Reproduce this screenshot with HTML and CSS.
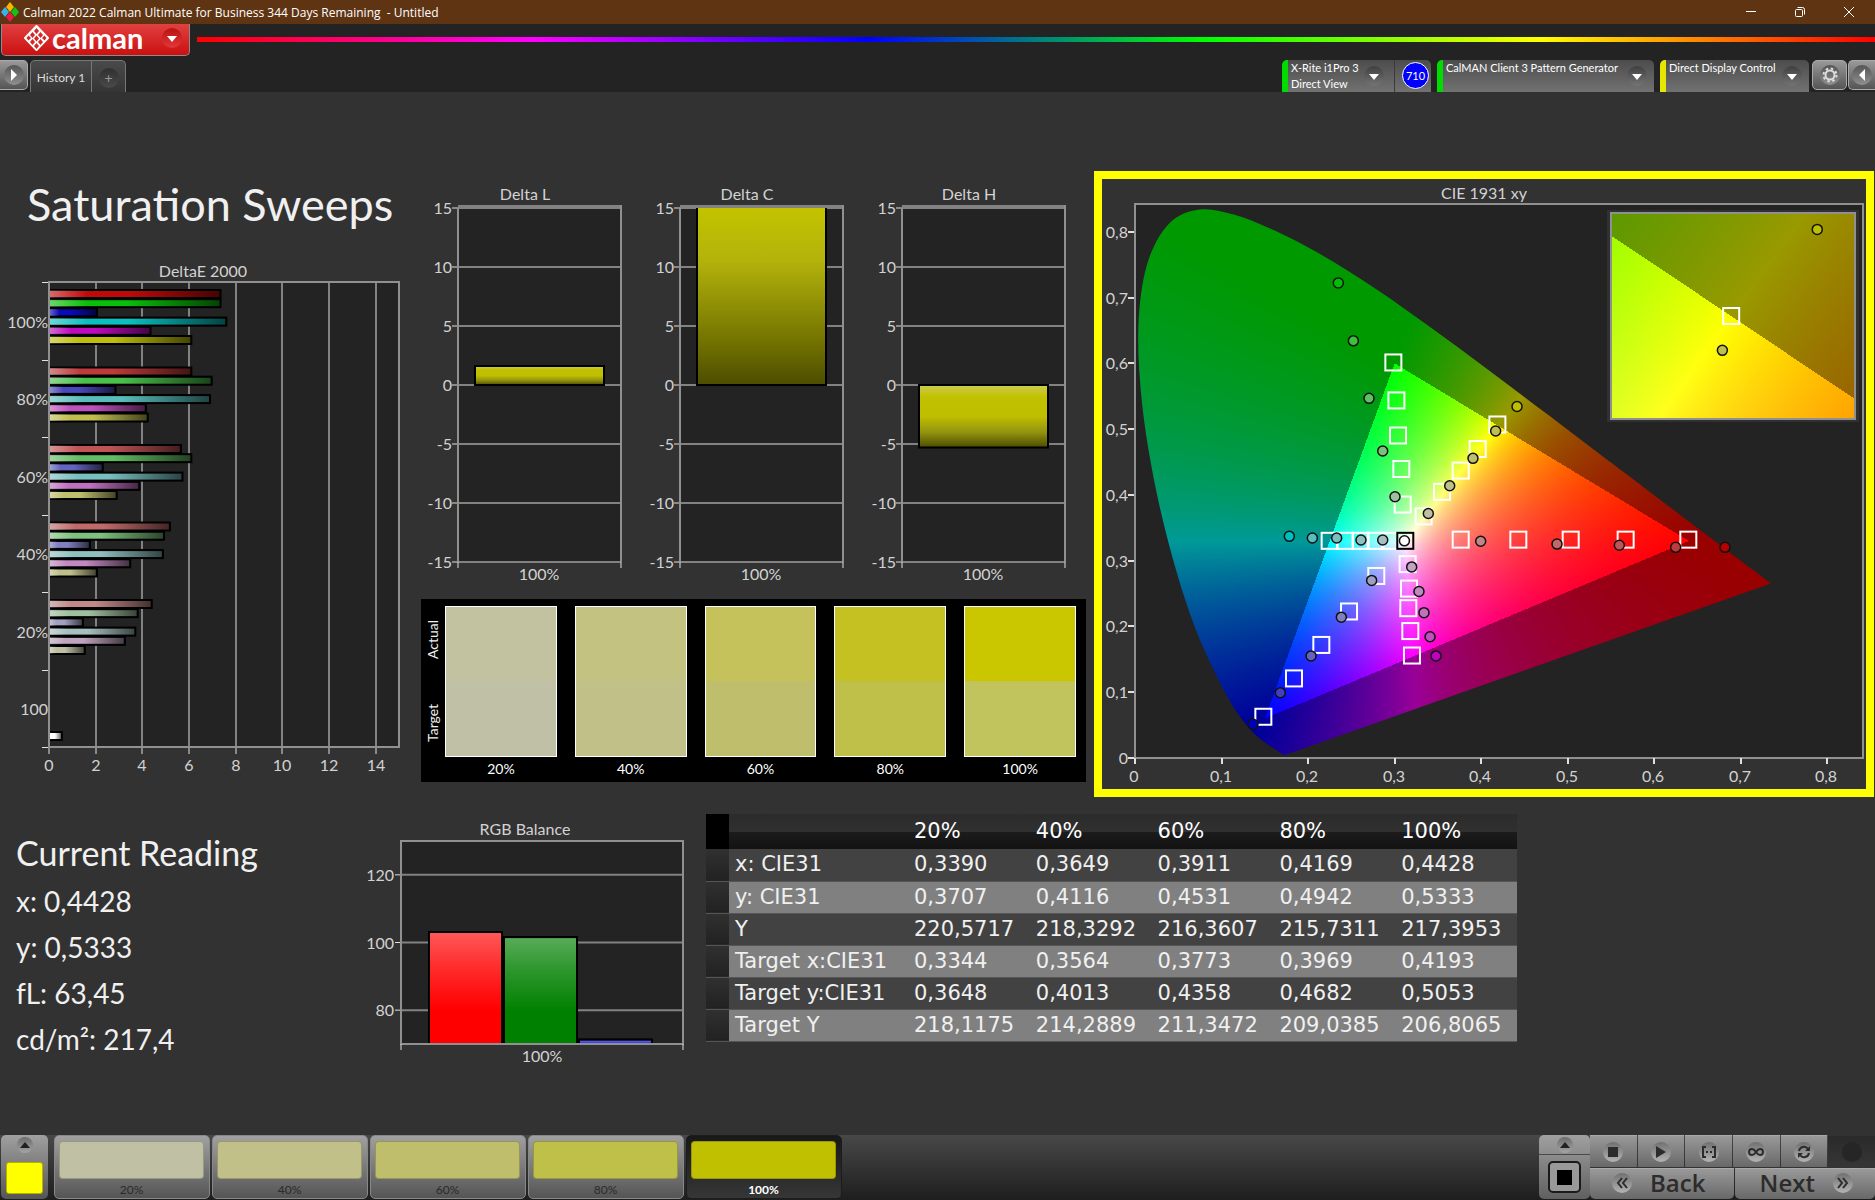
FILE: index.html
```html
<!DOCTYPE html>
<html lang="en">
<head>
  <meta charset="UTF-8">
  <meta name="viewport" content="width=device-width, initial-scale=1.0">
  <title>Calman 2022</title>
  <link rel="stylesheet" href="styles.css">
</head>
<body>
  <!-- Window title bar -->
  <div class="titlebar">
    <svg class="app-icon" width="18" height="20" viewBox="0 0 18 20">
      <path d="M9 0l4 5-4 5-4-5z" fill="#f5b800"/>
      <path d="M4 5l4 5-4 5-4-5z" fill="#35b5e8"/>
      <path d="M14 5l4 5-4 5-4-5z" fill="#12c412"/>
      <path d="M9 10l4 5-4 5-4-5z" fill="#f01848"/>
    </svg>
    <span class="window-title">Calman 2022 Calman Ultimate for Business 344 Days Remaining&nbsp; - Untitled</span>
    <div class="window-controls">
      <button aria-label="Minimize"><svg width="12" height="12"><path d="M1 5.500h10" stroke="#fff" fill="none"/></svg></button>
      <button aria-label="Restore"><svg width="12" height="12"><rect x="1.500" y="3.500" width="7" height="7" rx="1" stroke="#fff" fill="none"/><path d="M3.500 1.500h5a2 2 0 0 1 2 2v5" stroke="#fff" fill="none"/></svg></button>
      <button aria-label="Close"><svg width="12" height="12"><path d="M1 1l10 10M11 1L1 11" stroke="#fff" fill="none"/></svg></button>
    </div>
  </div>

  <header>
    <div class="brand-row">
      <button class="brand">
        <svg width="25" height="26" viewBox="0 0 25 26">
          <path d="M12.500 1L24 13 12.500 25 1 13z" fill="#fff" stroke="#fff" stroke-width="2" stroke-linejoin="round"/>
          <g fill="#d62525">
            <path d="M12.500 3l2.500 3-2.500 3-2.500-3z"/><path d="M8.500 7l2.500 3-2.500 3L6 10z"/><path d="M16.500 7l2.500 3-2.500 3-2.500-3z"/>
            <path d="M4.500 10.500L7 13l-2.500 2.500L2.500 13z"/><path d="M20.500 10.500l2 2.500-2 2.500L18 13z"/><path d="M12.500 10.500l2.500 3-2.500 3-2.500-3z"/>
            <path d="M8.500 14l2.500 3-2.500 3L6 17z"/><path d="M16.500 14l2.500 3-2.500 3-2.500-3z"/><path d="M12.500 18l2.500 3-2.500 3-2.500-3z"/>
          </g>
        </svg>
        <span class="brand-name">calman</span>
        <span class="knob knob-red"><svg width="12" height="7"><path d="M1 0h10L6 6z" fill="#fff"/></svg></span>
      </button>
      <div class="rainbow"></div>
    </div>

    <div class="tab-row">
      <button class="square-btn first" aria-label="Expand"><span class="knob"><svg width="8" height="12"><path d="M1 0v12l6-6z" fill="#fff"/></svg></span></button>
      <div class="tabs">
        <button class="tab">History 1</button>
        <button class="tab tab-add" aria-label="Add tab"><span class="knob knob-dark">+</span></button>
      </div>

      <div class="devices">
        <div class="device meter">
          <button class="device-btn">
            <span class="device-text">X-Rite i1Pro 3<br>Direct View</span>
            <span class="knob knob-dim"><svg width="12" height="7"><path d="M1 0h10L6 6z" fill="#fff"/></svg></span>
          </button>
          <button class="badge">710</button>
        </div>
        <div class="device source">
          <button class="device-btn">
            <span class="device-text">CalMAN Client 3 Pattern Generator</span>
            <span class="knob knob-dim"><svg width="12" height="7"><path d="M1 0h10L6 6z" fill="#fff"/></svg></span>
          </button>
        </div>
        <div class="device display">
          <button class="device-btn">
            <span class="device-text">Direct Display Control</span>
            <span class="knob knob-dim"><svg width="12" height="7"><path d="M1 0h10L6 6z" fill="#fff"/></svg></span>
          </button>
        </div>
        <button class="square-btn gear" aria-label="Settings"><span class="knob">
          <svg width="16" height="16" viewBox="-8 -8 16 16" fill="none" stroke="#ddd">
            <circle r="4.500" stroke-width="2"/>
            <circle r="6.500" stroke-width="2" stroke-dasharray="2.500 2.600"/>
          </svg></span></button>
        <button class="square-btn last" aria-label="Collapse"><span class="knob"><svg width="8" height="12"><path d="M7 0v12L1 6z" fill="#fff"/></svg></span></button>
      </div>
    </div>
  </header>

  <main>
    <div class="top-row">
      <section class="left">
        <h1>Saturation Sweeps</h1>
        <svg id="deltaE" class="chart" viewBox="0 0 414 530"></svg>
      </section>

      <section class="middle">
        <div class="deltas">
          <svg id="deltaL" class="chart" viewBox="0 0 222 428"></svg>
          <svg id="deltaC" class="chart" viewBox="0 0 222 428"></svg>
          <svg id="deltaH" class="chart" viewBox="0 0 222 428"></svg>
        </div>
        <div class="swatches">
          <div class="side"><span>Actual</span><span>Target</span></div>
          <div class="swatch"><div class="pair p20"></div>20%</div>
          <div class="swatch"><div class="pair p40"></div>40%</div>
          <div class="swatch"><div class="pair p60"></div>60%</div>
          <div class="swatch"><div class="pair p80"></div>80%</div>
          <div class="swatch"><div class="pair p100"></div>100%</div>
        </div>
      </section>

      <section class="cie">
        <svg id="cie" class="chart" viewBox="0 0 764 610"></svg>
      </section>
    </div>

    <div class="bottom-row">
      <section class="reading">
        <h2>Current Reading</h2>
        <p>x: 0,4428</p>
        <p>y: 0,5333</p>
        <p>fL: 63,45</p>
        <p>cd/m²: 217,4</p>
      </section>

      <svg id="rgb" class="chart" viewBox="0 0 349 280"></svg>

      <table>
        <thead>
          <tr><td class="handle"></td><th></th><th>20%</th><th>40%</th><th>60%</th><th>80%</th><th>100%</th></tr>
        </thead>
        <tbody>
          <tr><td class="handle"></td><th>x: CIE31</th><td>0,3390</td><td>0,3649</td><td>0,3911</td><td>0,4169</td><td>0,4428</td></tr>
          <tr><td class="handle"></td><th>y: CIE31</th><td>0,3707</td><td>0,4116</td><td>0,4531</td><td>0,4942</td><td>0,5333</td></tr>
          <tr><td class="handle"></td><th>Y</th><td>220,5717</td><td>218,3292</td><td>216,3607</td><td>215,7311</td><td>217,3953</td></tr>
          <tr><td class="handle"></td><th>Target x:CIE31</th><td>0,3344</td><td>0,3564</td><td>0,3773</td><td>0,3969</td><td>0,4193</td></tr>
          <tr><td class="handle"></td><th>Target y:CIE31</th><td>0,3648</td><td>0,4013</td><td>0,4358</td><td>0,4682</td><td>0,5053</td></tr>
          <tr><td class="handle"></td><th>Target Y</th><td>218,1175</td><td>214,2889</td><td>211,3472</td><td>209,0385</td><td>206,8065</td></tr>
        </tbody>
      </table>
    </div>
  </main>

  <footer>
    <button class="current" aria-label="Current pattern">
      <span class="knob knob-small"><svg width="10" height="6"><path d="M0 6h10L5 0z" fill="#222"/></svg></span>
      <span class="current-color"></span>
    </button>
    <div class="patterns">
      <button class="pattern"><span class="color c20"></span>20%</button>
      <button class="pattern"><span class="color c40"></span>40%</button>
      <button class="pattern"><span class="color c60"></span>60%</button>
      <button class="pattern"><span class="color c80"></span>80%</button>
      <button class="pattern selected"><span class="color c100"></span>100%</button>
    </div>

    <div class="transport">
      <div class="stop-box">
        <button class="stop-up" aria-label="More"><span class="knob knob-small"><svg width="10" height="6"><path d="M0 6h10L5 0z" fill="#222"/></svg></span></button>
        <button class="stop-main" aria-label="Pattern window"><span class="stop-frame"></span></button>
      </div>
      <div class="keys">
        <div class="key-row">
          <button aria-label="Stop"><span class="knob knob-light"><svg width="10" height="10"><path d="M0 0h10v10H0z" fill="#2c2c2c"/></svg></span></button>
          <button aria-label="Play"><span class="knob knob-light"><svg width="10" height="12"><path d="M0 0v12l10-6z" fill="#2c2c2c"/></svg></span></button>
          <button aria-label="Read range"><span class="knob knob-light"><svg width="14" height="12" fill="none" stroke="#2c2c2c" stroke-width="2"><path d="M4 1H1v10h3M10 1h3v10h-3"/><path d="M4 6h2M8 6h2"/></svg></span></button>
          <button aria-label="Continuous"><span class="knob knob-light"><svg width="16" height="8" fill="none" stroke="#2c2c2c" stroke-width="2"><path d="M8 4C6 1 5 1 4 1a3 3 0 0 0 0 6c1 0 2 0 4-3s3-3 4-3a3 3 0 0 1 0 6c-1 0-2 0-4-3z"/></svg></span></button>
          <button aria-label="Refresh"><span class="knob knob-light"><svg width="14" height="14" fill="none" stroke="#2c2c2c" stroke-width="2"><path d="M2 6a5 5 0 0 1 9-2M12 8a5 5 0 0 1-9 2"/><path d="M13 1v5H8zM1 13V8h5z" fill="#2c2c2c" stroke="none"/></svg></span></button>
          <button class="off" aria-label="Record" disabled><span class="knob knob-off"></span></button>
        </div>
        <div class="key-row nav">
          <button><span class="knob knob-light"><svg width="12" height="12" fill="none" stroke="#2c2c2c" stroke-width="2"><path d="M6 1L2 6l4 5M11 1L7 6l4 5"/></svg></span>Back</button>
          <button>Next<span class="knob knob-light"><svg width="12" height="12" fill="none" stroke="#2c2c2c" stroke-width="2"><path d="M1 1l4 5-4 5M6 1l4 5-4 5"/></svg></span></button>
        </div>
      </div>
    </div>
  </footer>

  <script src="charts.js"></script>
</body>
</html>
```
FILE: styles.css
```css
* {
  box-sizing: border-box;
}

body {
  margin: 0;
  min-height: 100vh;
  display: flex;
  flex-direction: column;
  background: #323232;
  color: #f0f0f0;
  font-family: Lato, "Liberation Sans", sans-serif;
}

button {
  font-family: inherit;
  color: inherit;
  border: none;
  padding: 0;
  background: none;
  cursor: pointer;
}

svg {
  display: block;
}

/* title bar */
.titlebar {
  height: 24px;
  display: flex;
  align-items: center;
  background: #5f3413;
  padding-left: 1px;
}

.window-title {
  flex: 1;
  margin-left: 4px;
  font-family: "Open Sans", sans-serif;
  font-size: 12px;
  color: #fff;
}

.window-controls {
  display: flex;
  padding-right: 2px;
}

.window-controls button {
  width: 49px;
  height: 24px;
  display: flex;
  align-items: center;
  justify-content: center;
}

/* header */
header {
  background: #232323;
}

.brand-row {
  display: flex;
  height: 36px;
}

.brand {
  width: 189px;
  height: 32px;
  margin-left: 1px;
  padding: 0 7px 3px 22px;
  display: flex;
  align-items: center;
  background: linear-gradient(#e04040, #cc1010);
  border: 1px solid #8c8c8c;
  border-top: none;
  border-radius: 0 0 5px 5px;
}

.brand-name {
  flex: 1;
  margin-left: 3px;
  text-align: left;
  font-size: 29px;
  line-height: 28px;
  font-weight: bold;
  color: #fff;
}

.rainbow {
  flex: 1;
  height: 5px;
  margin: 13px 0 0 7px;
  background: linear-gradient(to right, #f00, #f0f, #00f, #0f0, #ff0, #f00);
}

.knob {
  width: 20px;
  height: 20px;
  flex: none;
  border-radius: 50%;
  display: flex;
  align-items: center;
  justify-content: center;
  background: linear-gradient(#555, #909090);
}

.knob-red {
  background: linear-gradient(#b81414, #e23838);
}

.knob-red svg {
  margin-top: 2px;
}

.knob-dark {
  background: linear-gradient(#303030, #4a4a4a);
  color: #999;
  font-size: 14px;
}

.knob-dim {
  background: linear-gradient(#404040, #747474);
}

.knob-dim svg {
  margin-top: 2px;
}

.knob-small {
  width: 16px;
  height: 16px;
  background: linear-gradient(#6c6c6c, #a4a4a4);
}

.knob-light {
  background: linear-gradient(#707070, #b4b4b4);
}

.knob-off {
  background: #262626;
}

.tab-row {
  display: flex;
  height: 32px;
}

.square-btn {
  width: 35px;
  height: 30px;
  display: flex;
  align-items: center;
  justify-content: center;
  background: linear-gradient(#999, #555);
  border: 1px solid #aaa;
  border-radius: 5px;
}

.square-btn.first {
  width: 28px;
  border-left: none;
  border-radius: 0 5px 5px 0;
}

.square-btn.last {
  width: 27px;
  border-right: none;
  border-radius: 5px 0 0 5px;
}

.tabs {
  display: flex;
  margin-left: 2px;
  border: 1px solid #777;
  border-bottom: none;
  border-radius: 5px 5px 0 0;
  background: linear-gradient(#4a4a4a, #353535);
}

.tab {
  width: 60px;
  padding-top: 2px;
  font-size: 12px;
  color: #ddd;
}

.tab-add {
  width: 34px;
  display: flex;
  align-items: center;
  justify-content: center;
  border-left: 1px solid #777;
}

.devices {
  margin-left: auto;
  display: flex;
}

.device {
  display: flex;
  margin-right: 6px;
  border-radius: 5px 5px 0 0;
  border-left: 6px solid #00dc00;
  background: linear-gradient(#4c4c4c, #727272);
}

.device.meter {
  width: 149px;
}

.device.source {
  width: 217px;
}

.device.display {
  width: 149px;
  margin-right: 3px;
  border-left-color: #e6e600;
}

.device-btn {
  flex: 1;
  padding: 0 7px 0 3px;
  display: flex;
  justify-content: space-between;
  align-items: center;
  text-align: left;
}

.device-text {
  align-self: flex-start;
  font-size: 11px;
  line-height: 16px;
  white-space: nowrap;
  color: #fff;
}

.meter .device-btn {
  padding-right: 10px;
  border-right: 1px solid #3a3a3a;
}

.badge {
  width: 27px;
  height: 27px;
  margin: 2px 2px 0 7px;
  border: 1px solid #fff;
  border-radius: 50%;
  background: #00f;
  color: #fff;
  font-size: 11px;
}

.gear {
  margin-right: 1px;
}

/* main area */
main {
  flex: 1;
  padding-top: 79px;
}

.top-row {
  display: grid;
  grid-template-columns: 414fr 672fr 789fr;
}

.chart {
  width: 100%;
  height: auto;
  overflow: visible;
}

.chart text {
  font-size: 16px;
  fill: #d2d2d2;
}

.left h1 {
  margin: 0 0 23px 27px;
  font-size: 45px;
  font-weight: normal;
  line-height: 66px;
  white-space: nowrap;
}

.deltas {
  display: grid;
  grid-template-columns: repeat(3, 1fr);
  padding-right: 6px;
}

.swatches {
  display: flex;
  gap: 18px;
  margin-left: 7px;
  padding: 7px 10px 0 3px;
  height: 183px;
  background: #000;
  color: #fff;
  font-size: 14px;
}

.side {
  display: flex;
  width: 18px;
  height: 150px;
  margin-right: -15px;
  padding: 14px 0;
  writing-mode: vertical-rl;
  transform: rotate(180deg);
  flex-direction: row-reverse;
  justify-content: space-between;
  font-size: 14px;
  color: #f0f0f0;
}

.swatch {
  flex: 1;
  text-align: center;
  line-height: 24px;
}

.pair {
  height: 151px;
  border: 1px solid #fff;
}

.p20 {
  background: linear-gradient(#c2c2a0 50%, #c0c0a6 50%);
}

.p40 {
  background: linear-gradient(#c3c280 50%, #c0c088 50%);
}

.p60 {
  background: linear-gradient(#c5c25c 50%, #bfbe6c 50%);
}

.p80 {
  background: linear-gradient(#c5c123 50%, #bfc049 50%);
}

.p100 {
  background: linear-gradient(#cac600 50%, #c1c45d 50%);
}

.cie {
  margin: 0 1px 0 8px;
  border: 8px solid #ff0;
}

.bottom-row {
  display: grid;
  grid-template-columns: 357fr 349fr 811fr 358fr;
  align-items: start;
  padding-top: 1px;
}

.reading {
  padding: 32px 0 0 16px;
}

.reading h2 {
  margin: 0 0 2px;
  font-size: 34px;
  font-weight: normal;
  line-height: 46px;
}

.reading p {
  margin: 0;
  font-size: 28px;
  line-height: 46px;
}

/* results table */
table {
  width: 100%;
  margin-top: 16px;
  border-collapse: collapse;
  table-layout: fixed;
  font-family: "DejaVu Sans", sans-serif;
  font-size: 21px;
  line-height: 21px;
}

th, td {
  height: 32px;
  padding: 0 0 0 6px;
  text-align: left;
  font-weight: normal;
  white-space: nowrap;
}

thead th {
  height: 35px;
  color: #fff;
  background: linear-gradient(#2b2b2b, #303030 50%, #1c1c1c 50%, #121212);
}

thead th:nth-child(2) {
  width: 179px;
}

.handle {
  width: 23px;
  padding: 0;
  background: linear-gradient(#303030, #222);
}

thead .handle {
  background: #000;
}

tbody th, tbody td {
  border-bottom: 1px solid #555;
}

tbody tr {
  background: #424242;
}

tbody tr:nth-child(even) {
  background: #808080;
}

/* footer */
footer {
  height: 65px;
  display: flex;
  align-items: flex-start;
  background: linear-gradient(#484848, #1e1e1e);
}

.current {
  width: 47px;
  height: 64px;
  margin: 0 6px 0 1px;
  display: flex;
  flex-direction: column;
  align-items: center;
  justify-content: space-between;
  padding: 2px 0 5px;
  border-radius: 5px;
  background: linear-gradient(#a0a0a0, #555);
}

.current-color {
  width: 37px;
  height: 32px;
  border: 1px solid #b4b400;
  border-radius: 3px;
  background: #ff0;
}

.patterns {
  display: flex;
  gap: 2px;
}

.pattern {
  width: 156px;
  height: 64px;
  padding: 5px 5px 0 4px;
  border: 1px solid #888;
  border-radius: 5px;
  background: linear-gradient(#a0a0a0, #555);
  color: #2a2a2a;
  font-size: 12px;
  line-height: 22px;
}

.pattern.selected {
  border-color: #1c1c1c;
  background: linear-gradient(#181818, #363636);
  color: #fff;
  font-weight: bold;
}

.color {
  display: block;
  height: 38px;
  border-radius: 4px;
  border: 1px solid rgba(0, 0, 0, 0.2);
}

.c20 { background: #c0c0a4; }
.c40 { background: #c0c088; }
.c60 { background: #bfbe6c; }
.c80 { background: #bfc049; }
.c100 { background: #c1c000; }

.transport {
  margin-left: auto;
  display: flex;
}

.stop-box {
  width: 51px;
  height: 64px;
  border-radius: 5px;
  overflow: hidden;
  background: linear-gradient(#a0a0a0, #606060);
}

.stop-up {
  width: 100%;
  height: 20px;
  display: flex;
  align-items: center;
  justify-content: center;
  border-bottom: 1px solid #4a4a4a;
}

.stop-main {
  width: 100%;
  height: 44px;
  display: flex;
  align-items: center;
  justify-content: center;
}

.stop-frame {
  width: 33px;
  height: 32px;
  border: 2px solid #1a1a1a;
  border-radius: 5px;
  background: linear-gradient(#000, #000) center / 15px 15px no-repeat, #999;
}

.keys {
  width: 285px;
}

.key-row {
  display: flex;
  gap: 1px;
  height: 32px;
}

.key-row button {
  flex: 1;
  display: flex;
  align-items: center;
  justify-content: center;
  border-top: 1px solid #aaa;
  background: linear-gradient(#999, #686868);
}

.key-row .off {
  border-top-color: #333;
  background: linear-gradient(#2a2a2a, #363636);
}

.nav {
  margin-top: 1px;
  height: 31px;
}

.nav button {
  gap: 18px;
  padding: 0 6px 3px 0;
  font-family: "Open Sans", sans-serif;
  font-size: 24px;
  font-weight: 600;
  line-height: 26px;
  color: #2c2c2c;
  border-radius: 0 0 5px 5px;
}

.nav button:last-child {
  padding: 0 0 3px 3px;
}
```
FILE: charts.js
```js
const NS = 'http://www.w3.org/2000/svg';

function add(parent, name, attrs, text) {
  const el = document.createElementNS(NS, name);
  for (const key in attrs) el.setAttribute(key, attrs[key]);
  if (text !== undefined) el.textContent = text;
  parent.appendChild(el);
  return el;
}

function line(svg, x1, y1, x2, y2, color, width) {
  add(svg, 'line', { x1, y1, x2, y2, stroke: color || '#828282', 'stroke-width': width || 2 });
}

function label(svg, x, y, text, anchor) {
  add(svg, 'text', { x, y, 'text-anchor': anchor || 'middle' }, text);
}

function gradient(svg, id, horizontal, stops) {
  const g = add(svg, 'linearGradient', { id, x1: 0, y1: 0, x2: horizontal ? 1 : 0, y2: horizontal ? 0 : 1 });
  stops.forEach(s => add(g, 'stop', { offset: s[0], 'stop-color': s[1], 'stop-opacity': s[2] }));
}

// DeltaE 2000, horizontal bars
function drawDeltaE() {
  const svg = document.getElementById('deltaE');
  const left = 49, right = 399, top = 22, bottom = 487;
  const unit = (right - left) / 15;
  const step = (bottom - top) / 6;
  const groups = [
    ['100%', [7.35, 7.35, 2.05, 7.6, 4.35, 6.1], ['#c00a0a', '#0abf0a', '#0a0abc', '#0abfbf', '#bf0abf', '#bfbf0a']],
    ['80%', [6.1, 6.97, 2.85, 6.9, 4.15, 4.23], ['#bf3a3a', '#4abf4a', '#4848bf', '#58bcbc', '#bf50bf', '#bfbf50']],
    ['60%', [5.65, 6.1, 2.3, 5.72, 3.87, 2.9], ['#c05454', '#62bc62', '#6464c0', '#78bfbf', '#c070c0', '#bfbf70']],
    ['40%', [5.18, 4.93, 1.75, 4.88, 3.48, 2.05], ['#c06a6a', '#7ec07e', '#8080c0', '#90bfbf', '#c08ac0', '#bfbf8c']],
    ['20%', [4.4, 3.8, 1.45, 3.7, 3.25, 1.53], ['#c08888', '#a0bf9f', '#a0a0c0', '#a8bfbf', '#bfa4bf', '#bfbfa4']]
  ];
  gradient(svg, 'barX', true, [[0, '#fff', 0.4], [0.22, '#fff', 0], [0.45, '#000', 0], [1, '#000', 0.65]]);

  label(svg, 203, 17, 'DeltaE 2000');
  add(svg, 'rect', { x: left, y: top, width: right - left, height: bottom - top, fill: '#232323' });
  for (let v = 0; v < 15; v += 2) {
    const x = Math.round(left + v * unit);
    line(svg, x, top, x, bottom);
    line(svg, x, bottom, x, bottom + 7, '#e0e0e0', 1);
    label(svg, x, bottom + 24, v);
  }
  for (let i = 0; i <= 6; i++) {
    const y = Math.round(top + i * step) + 0.5;
    line(svg, left - 7, y, left, y, '#e0e0e0', 1);
  }
  function bar(y, value, color) {
    const r = { x: left, y, width: value * unit, height: 8, stroke: '#000', 'stroke-width': 2 };
    add(svg, 'rect', Object.assign({ fill: color }, r));
    add(svg, 'rect', Object.assign({}, r, { fill: 'url(#barX)', 'stroke-width': 1 }));
  }
  groups.forEach((g, i) => {
    const y = top + i * step;
    g[1].forEach((v, k) => bar(y + 8 + k * 9.2, v, g[2][k]));
    label(svg, left - 1, y + step / 2 + 7, g[0], 'end');
  });
  bar(472, 0.55, '#fff');
  label(svg, left - 1, top + 5.5 * step + 7, '100', 'end');
  add(svg, 'rect', { x: left, y: top, width: right - left, height: bottom - top, fill: 'none', stroke: '#909090', 'stroke-width': 2 });
}

// Delta L / C / H, one vertical bar each
function drawDelta(id, title, value) {
  const svg = document.getElementById(id);
  const left = 44, right = 207, top = 37, bottom = 391;
  const y = v => top + (15 - v) * (bottom - top) / 30;
  gradient(svg, id + 'Fill', false, value > 10
    ? [[0, '#c3c300', 1], [0.3, '#b2b20c', 1], [0.8, '#6c6c00', 1], [1, '#4c4c00', 1]]
    : [[0, '#cccc50', 1], [0.2, '#c1c100', 1], [0.5, '#bfbf00', 1], [0.75, '#949410', 1], [1, '#4c4c00', 1]]);

  label(svg, 111, 29, title);
  add(svg, 'rect', { x: left, y: top, width: right - left, height: bottom - top, fill: '#232323' });
  for (let v = -15; v <= 15; v += 5) {
    line(svg, left, y(v), right, y(v));
    line(svg, left - 6, y(v), left, y(v), '#e0e0e0', 1);
    label(svg, left - 6, y(v) + 6, v, 'end');
  }
  line(svg, left, top - 1, right, top - 1, '#828282', 4);
  line(svg, left, top, left, bottom, '#909090');
  line(svg, right, top - 3, right, bottom, '#909090');
  line(svg, left, bottom, left, bottom + 6, '#e0e0e0', 1);
  line(svg, right, bottom, right, bottom + 6, '#e0e0e0', 1);

  const y1 = y(Math.min(15, Math.max(value, 0)));
  const y2 = y(Math.min(value, 0));
  add(svg, 'rect', { x: 61, y: y1, width: 129, height: y2 - y1, fill: `url(#${id}Fill)` });
  add(svg, 'path', { d: `M61 ${y1}V${y2}H190V${y1}` + (value < 15 ? 'Z' : ''), fill: 'none', stroke: '#000', 'stroke-width': 2 });
  label(svg, 125, 409, '100%');
}

function drawRgb() {
  const svg = document.getElementById('rgb');
  const left = 44, right = 326, top = 43, bottom = 246;
  const y = v => bottom - (v - 70) * (bottom - top) / 60;
  gradient(svg, 'glow', false, [[0, '#fff', 0.35], [0.3, '#fff', 0.18], [0.7, '#fff', 0]]);

  label(svg, 168, 37, 'RGB Balance');
  add(svg, 'rect', { x: left, y: top, width: right - left, height: bottom - top, fill: '#232323' });
  [80, 100, 120].forEach(v => {
    line(svg, left, y(v), right, y(v));
    line(svg, left - 6, y(v), left, y(v), '#e0e0e0', 1);
    label(svg, left - 7, y(v) + 6, v, 'end');
  });
  [['#ff0000', 103.1], ['#008000', 101.6], ['#3c3cf0', 71.3]].forEach((b, i) => {
    const r = { x: 72 + i * 75, y: y(b[1]), width: 73, height: bottom - y(b[1]), stroke: '#000', 'stroke-width': 2 };
    add(svg, 'rect', Object.assign({ fill: b[0] }, r));
    add(svg, 'rect', Object.assign({}, r, { fill: 'url(#glow)' }));
  });
  add(svg, 'rect', { x: left, y: top, width: right - left, height: bottom - top, fill: 'none', stroke: '#909090', 'stroke-width': 2 });
  line(svg, left, bottom, left, bottom + 6, '#e0e0e0', 1);
  line(svg, right, bottom, right, bottom + 6, '#e0e0e0', 1);
  label(svg, 185, 264, '100%');
}

// spectral locus, CIE 1931 2 degree observer
const locus = [
  [0.1741, 0.005], [0.1733, 0.0048], [0.1714, 0.0051], [0.1689, 0.0069], [0.1644, 0.0109], [0.1566, 0.0177],
  [0.1510, 0.0227], [0.144, 0.0297], [0.1355, 0.0399], [0.1241, 0.0578], [0.1096, 0.0868], [0.0913, 0.1327],
  [0.0687, 0.2007], [0.0454, 0.295], [0.0235, 0.4127], [0.0082, 0.5384], [0.0039, 0.6548], [0.0139, 0.7502],
  [0.0389, 0.812], [0.0743, 0.8338], [0.1142, 0.8262], [0.1547, 0.8059], [0.1929, 0.7816], [0.2296, 0.7543],
  [0.2658, 0.7243], [0.3016, 0.6923], [0.3373, 0.6589], [0.3731, 0.6245], [0.4087, 0.5896], [0.4441, 0.5547],
  [0.4788, 0.5202], [0.5125, 0.4866], [0.5448, 0.4544], [0.5752, 0.4242], [0.6029, 0.3965], [0.627, 0.3725],
  [0.6482, 0.3514], [0.6658, 0.334], [0.6915, 0.3083], [0.7079, 0.292], [0.723, 0.277], [0.7347, 0.2653]
];

// targets and readings per hue, from 100% to 20%
const targets = [
  [0.2985, 0.6014], [0.302, 0.5437], [0.3039, 0.4903], [0.3077, 0.4394], [0.3093, 0.3854],
  [0.4187, 0.5071], [0.3959, 0.4698], [0.3763, 0.437], [0.3547, 0.4047], [0.3335, 0.3674],
  [0.2249, 0.3302], [0.2426, 0.3302], [0.2607, 0.3302], [0.2781, 0.3302], [0.2947, 0.3302],
  [0.6393, 0.332], [0.5669, 0.332], [0.5034, 0.332], [0.4429, 0.332], [0.3763, 0.332],
  [0.32, 0.1558], [0.3181, 0.193], [0.3158, 0.2278], [0.3166, 0.2576], [0.315, 0.2948],
  [0.1483, 0.0627], [0.1837, 0.121], [0.2153, 0.1719], [0.2473, 0.2228], [0.2788, 0.2768]
];
const readings = [
  [0.2349, 0.7224, '#00bf00'], [0.2523, 0.6343, '#40bf40'], [0.2704, 0.5468, '#60bf60'], [0.2862, 0.4667, '#7ebf7e'], [0.3004, 0.3972, '#a0bfa0'],
  [0.4414, 0.5344, '#bfbf00'], [0.4167, 0.4972, '#bfbf50'], [0.3905, 0.4556, '#bfbf70'], [0.3636, 0.414, '#bfbf8c'], [0.3389, 0.3718, '#bfbfa4'],
  [0.1783, 0.337, '#00bfbf'], [0.2049, 0.3345, '#58bfbf'], [0.233, 0.3345, '#78bfbf'], [0.2611, 0.3314, '#90bfbf'], [0.2862, 0.3314, '#a8bfbf'],
  [0.6817, 0.3203, '#b80000'], [0.6247, 0.3203, '#bf3a3a'], [0.5596, 0.3234, '#bf5454'], [0.4876, 0.3252, '#bf6a6a'], [0.3994, 0.3296, '#bf8888'],
  [0.3478, 0.1552, '#bf00bf'], [0.3409, 0.1843, '#bf50bf'], [0.3339, 0.221, '#bf70bf'], [0.3281, 0.2532, '#bf8abf'], [0.3197, 0.2905, '#bfa4bf'],
  [0.1363, 0.0515, '#0000bf'], [0.1679, 0.0993, '#4040bf'], [0.2034, 0.1552, '#6464bf'], [0.2384, 0.2141, '#8080bf'], [0.2734, 0.27, '#a0a0bf']
];

// chromaticity to screen colour, dimmed outside Rec.709
function xyColor(x, y) {
  const X = x / y, Z = (1 - x - y) / y;
  const rgb = [
    3.2406 * X - 1.5372 - 0.4986 * Z,
    -0.9689 * X + 1.8758 + 0.0415 * Z,
    0.0557 * X - 0.204 + 1.057 * Z
  ];
  const dim = Math.min(...rgb) < 0 ? 0.6 : 1;
  const max = Math.max(...rgb);
  return rgb.map(c => 255 * dim * Math.max(c, 0) / max);
}

function fillGamut(svg, box, range, clip) {
  const g = add(svg, 'g', clip ? { 'clip-path': clip } : {});
  const fo = add(g, 'foreignObject', { x: box.x, y: box.y, width: box.w, height: box.h });
  const canvas = document.createElement('canvas');
  canvas.width = box.w;
  canvas.height = box.h;
  canvas.style.display = 'block';
  fo.appendChild(canvas);
  const ctx = canvas.getContext('2d');
  const img = ctx.createImageData(box.w, box.h);
  for (let j = 0; j < box.h; j++) {
    for (let i = 0; i < box.w; i++) {
      const x = range.x0 + (i + 0.5) / box.w * (range.x1 - range.x0);
      const y = range.y1 - (j + 0.5) / box.h * (range.y1 - range.y0);
      const c = xyColor(x, y);
      const p = (j * box.w + i) * 4;
      img.data[p] = c[0];
      img.data[p + 1] = c[1];
      img.data[p + 2] = c[2];
      img.data[p + 3] = 255;
    }
  }
  ctx.putImageData(img, 0, 0);
}

function square(svg, x, y, color) {
  add(svg, 'rect', { x: x - 8, y: y - 8, width: 16, height: 16, fill: 'none', stroke: color || '#fff', 'stroke-width': 2 });
}

function dot(svg, x, y, fill) {
  add(svg, 'circle', { cx: x, cy: y, r: 5, fill, stroke: '#111', 'stroke-width': 1.5 });
}

function drawCie() {
  const svg = document.getElementById('cie');
  const left = 33, right = 761, top = 25, bottom = 579;
  const sx = x => left + x * 865.5;
  const sy = y => bottom - y * 657.7;

  label(svg, 382, 20, 'CIE 1931 xy');
  add(svg, 'rect', { x: left, y: top, width: right - left, height: bottom - top, fill: '#232323', stroke: '#909090', 'stroke-width': 2 });
  for (let i = 0; i <= 8; i++) {
    const text = i ? '0,' + i : '0';
    const x = Math.round(sx(i / 10)), y = Math.round(sy(i / 10));
    line(svg, x, bottom, x, bottom + 6, '#e0e0e0', 2);
    label(svg, x - 1, bottom + 24, text);
    line(svg, left - 7, y, left - 1, y, '#e0e0e0', 2);
    label(svg, left - 7, y + 6, text, 'end');
  }

  const clip = add(svg, 'clipPath', { id: 'shoe' });
  const pts = locus.map(p => [sx(p[0]), sy(p[1])]);
  // smooth curve through the locus points
  let d = `M${pts[0]}`;
  for (let i = 0; i < pts.length - 1; i++) {
    const p0 = pts[i - 1] || pts[i], p1 = pts[i], p2 = pts[i + 1], p3 = pts[i + 2] || p2;
    d += `C${p1[0] + (p2[0] - p0[0]) / 6},${p1[1] + (p2[1] - p0[1]) / 6} ${p2[0] - (p3[0] - p1[0]) / 6},${p2[1] - (p3[1] - p1[1]) / 6} ${p2}`;
  }
  add(clip, 'path', { d: d + 'Z' });
  fillGamut(svg, { x: left, y: top, w: right - left, h: bottom - top },
    { x0: 0, x1: (right - left) / 865.5, y0: 0, y1: (bottom - top) / 657.7 }, 'url(#shoe)');

  targets.forEach(t => square(svg, sx(t[0]), sy(t[1])));
  square(svg, sx(0.3123), sy(0.3302), '#000');
  readings.forEach(r => dot(svg, sx(r[0]), sy(r[1]), r[2]));
  dot(svg, sx(0.3113), sy(0.3302), '#fff');

  // zoomed inset round the 100% yellow target
  const box = { x: 509, y: 34, w: 244, h: 206 };
  const range = { x0: 0.3865, x1: 0.4531, y0: 0.472, y1: 0.5386 };
  const ix = x => box.x + (x - range.x0) / (range.x1 - range.x0) * box.w;
  const iy = y => box.y + (range.y1 - y) / (range.y1 - range.y0) * box.h;
  add(svg, 'rect', { x: box.x - 4, y: box.y - 3, width: box.w + 8, height: box.h + 6, fill: '#303030' });
  fillGamut(svg, box, range);
  add(svg, 'rect', { x: box.x, y: box.y, width: box.w, height: box.h, fill: 'none', stroke: '#909090', 'stroke-width': 2 });
  square(svg, ix(0.4193), iy(0.5053));
  dot(svg, ix(0.4428), iy(0.5333), '#bfbf00');
  dot(svg, ix(0.4169), iy(0.4942), '#bfbf50');
}

drawDeltaE();
drawDelta('deltaL', 'Delta L', 1.6);
drawDelta('deltaC', 'Delta C', 20);
drawDelta('deltaH', 'Delta H', -5.3);
drawRgb();
drawCie();
```
